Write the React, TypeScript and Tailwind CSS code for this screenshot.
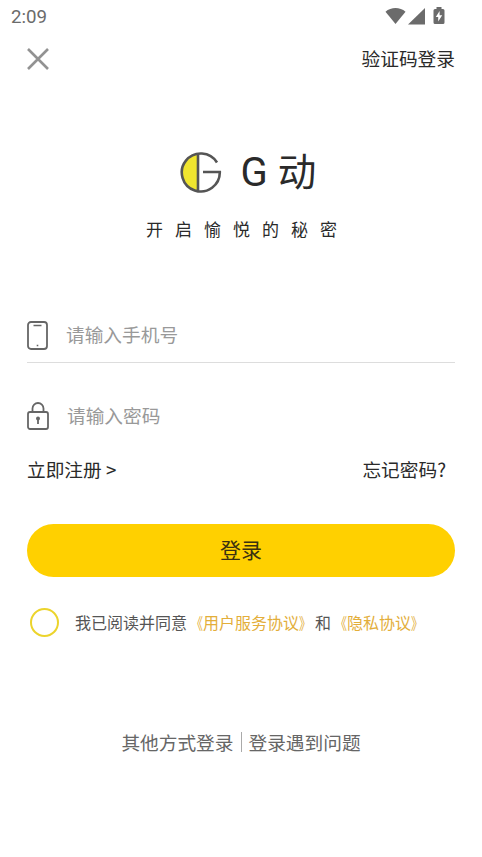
import React, { useState } from 'react';

const StatusBar: React.FC = () => (
  <div className="flex h-8 items-center justify-between pl-[11px] pr-[37px] text-[#6b6b6b]">
    <span className="pt-[3px] font-[Roboto] text-[18.700px] leading-none">2:09</span>
    <div className="flex items-center">
      <svg width="21" height="18" viewBox="0 0 21 18" fill="currentColor">
        <path d="M0.500 4.800C6-.2 15-.2 20.500 4.800L10.500 17Z" />
      </svg>
      <svg className="ml-0.5" width="17" height="17" viewBox="0 0 17 17" fill="currentColor">
        <path d="M0 16.500L17 0V16.500Z" />
      </svg>
      <svg className="ml-2" width="12" height="18" viewBox="0 0 12 18">
        <path d="M3.500 0h5v2H10a1.500 1.500 0 0 1 1.500 1.500v12A1.500 1.500 0 0 1 10 17H2A1.500 1.500 0 0 1 .5 15.500v-12A1.500 1.500 0 0 1 2 2h1.500z" fill="currentColor" />
        <path d="M6.600 4L2.800 10h2.400v4.500l4-6.200H6.600z" fill="#fff" />
      </svg>
    </div>
  </div>
);

const Logo: React.FC = () => (
  <svg width="42" height="42" viewBox="0 0 42 42" fill="none">
    <path d="M18 2.200A19 19 0 0 0 18 39.800Z" fill="#f0e52f" />
    <path d="M37 11.500A19 19 0 1 0 39.800 21H23M18 2.500V39.500" stroke="#555" strokeWidth="2.600" />
  </svg>
);

const DocLink: React.FC<{ name: string }> = ({ name }) => (
  <a className="text-[#e3ae3a]">
    <span className="inline-block origin-right scale-x-75">《</span>
    {name}
    <span className="inline-block origin-left scale-x-75">》</span>
  </a>
);

export default function App() {
  const [agreed, setAgreed] = useState(false);

  return (
    <div className="min-h-[857px] w-[482px] bg-white font-['Noto_Sans_CJK_SC',sans-serif] text-[#2a2a2a]">
      <StatusBar />

      <header className="flex h-[54px] items-center justify-between px-[27px]">
        <svg width="22" height="22" viewBox="0 0 22 22" stroke="#929292" strokeWidth="2.600">
          <path d="M1 1L21 21M21 1L1 21" />
        </svg>
        <button className="pb-0.5 text-[18.700px] leading-none">验证码登录</button>
      </header>

      <div className="mt-[61px] flex h-[50px] items-center justify-center gap-[19px] pl-[14px]">
        <Logo />
        <h1 className="flex items-baseline gap-2.5 pb-px text-[38.500px] leading-none">
          <span className="font-[Roboto] text-[40px] leading-none">G</span>
          <span>动</span>
        </h1>
      </div>
      <p className="mt-5 pl-[146px] text-[17px] leading-6 tracking-[12px]">开启愉悦的秘密</p>

      <form className="mt-[68px] px-[27px]" onSubmit={e => e.preventDefault()}>
        <label className="flex h-[54px] items-center border-b border-[#ddd]">
          <svg width="21" height="29" viewBox="0 0 21 29" fill="none" stroke="#666" strokeWidth="1.800">
            <rect x="1" y="1" width="19" height="27" rx="3" />
            <path d="M6.500 4.500h8M9.700 24.500h1.600" strokeWidth="1.600" />
          </svg>
          <input type="tel" placeholder="请输入手机号" className="ml-[18px] w-80 pb-0.5 text-[18.700px] outline-none placeholder:text-[#999]" />
        </label>
        <label className="mt-[26px] flex h-[54px] items-center">
          <svg width="22" height="28" viewBox="0 0 22 28" fill="none" stroke="#666" strokeWidth="1.800">
            <rect x="1" y="10" width="20" height="17" rx="2" />
            <path d="M5.500 10V6.500a5.500 5.500 0 0 1 11 0V10M11 17v5" />
            <circle cx="11" cy="16.500" r="2" fill="#666" stroke="none" />
          </svg>
          <input type="password" placeholder="请输入密码" className="ml-[18px] w-80 pb-0.5 text-[18.700px] outline-none placeholder:text-[#999]" />
        </label>

        <div className="mt-3 flex h-[28px] items-center justify-between pr-[9px] text-[18.700px]">
          <button type="button">立即注册 &gt;</button>
          <button type="button">忘记密码?</button>
        </div>

        <button className="mt-[41px] flex h-[53px] w-full items-center justify-center rounded-full bg-[#ffd000] pb-0.5 text-[21px] text-[#3a3010]">登录</button>

        <div className="mt-[30px] flex h-[30px] items-center pl-[3px] text-[16px] text-[#555]">
          <button
            type="button"
            onClick={() => setAgreed(!agreed)}
            className={agreed ? 'size-[29px] rounded-full border-2 border-[#ecd42c] bg-[#ecd42c]' : 'size-[29px] rounded-full border-2 border-[#ecd42c]'}
          />
          <p className="ml-4 whitespace-nowrap pb-px">
            我已阅读并同意<DocLink name="用户服务协议" />和<DocLink name="隐私协议" />
          </p>
        </div>
      </form>

      <footer className="mt-[91px] flex items-center justify-center text-[18.700px] text-[#666]">
        <a>其他方式登录</a>
        <span className="mx-[7px] h-5 w-px bg-[#aaa]" />
        <a>登录遇到问题</a>
      </footer>
    </div>
  );
}
